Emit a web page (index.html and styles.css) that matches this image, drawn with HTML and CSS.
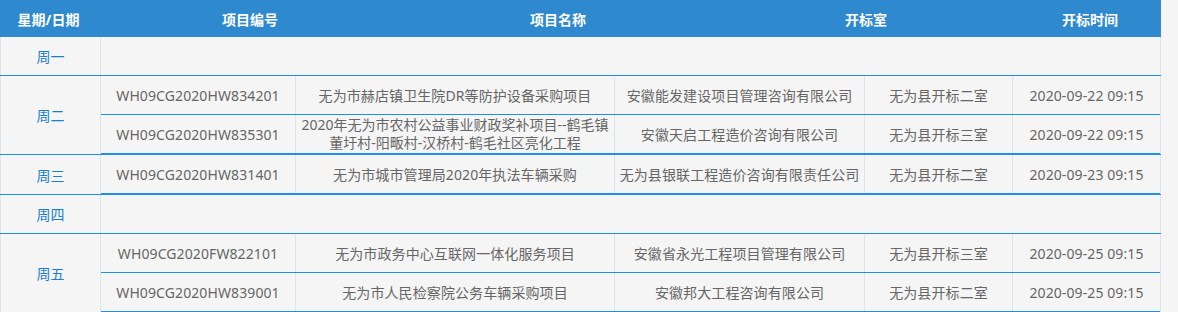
FILE: index.html
```html
<!DOCTYPE html>
<html lang="zh-CN">
<head>
<meta charset="utf-8">
<title>开标安排</title>
<link rel="stylesheet" href="styles.css">
</head>
<body>
<div class="schedule">
  <div class="head">
    <div class="hcell">星期/日期</div>
    <div class="hcell">项目编号</div>
    <div class="hcell">项目名称</div>
    <div class="hcell">开标室</div>
    <div class="hcell">开标时间</div>
  </div>

  <div class="day-row">
    <div class="day">周一</div>
    <div class="items"></div>
  </div>

  <div class="day-row">
    <div class="day">周二</div>
    <div class="items">
      <div class="item">
        <div class="cell">WH09CG2020HW834201</div>
        <div class="cell">无为市赫店镇卫生院DR等防护设备采购项目</div>
        <div class="cell">安徽能发建设项目管理咨询有限公司</div>
        <div class="cell">无为县开标二室</div>
        <div class="cell last">2020-09-22 09:15</div>
      </div>
      <div class="item">
        <div class="cell">WH09CG2020HW835301</div>
        <div class="cell two">2020年无为市农村公益事业财政奖补项目--鹤毛镇<br>董圩村-阳畈村-汉桥村-鹤毛社区亮化工程</div>
        <div class="cell">安徽天启工程造价咨询有限公司</div>
        <div class="cell">无为县开标三室</div>
        <div class="cell last">2020-09-22 09:15</div>
      </div>
    </div>
  </div>

  <div class="day-row">
    <div class="day">周三</div>
    <div class="items">
      <div class="item">
        <div class="cell">WH09CG2020HW831401</div>
        <div class="cell">无为市城市管理局2020年执法车辆采购</div>
        <div class="cell">无为县银联工程造价咨询有限责任公司</div>
        <div class="cell">无为县开标二室</div>
        <div class="cell last">2020-09-23 09:15</div>
      </div>
    </div>
  </div>

  <div class="day-row">
    <div class="day">周四</div>
    <div class="items"></div>
  </div>

  <div class="day-row">
    <div class="day">周五</div>
    <div class="items">
      <div class="item">
        <div class="cell">WH09CG2020FW822101</div>
        <div class="cell">无为市政务中心互联网一体化服务项目</div>
        <div class="cell">安徽省永光工程项目管理有限公司</div>
        <div class="cell">无为县开标三室</div>
        <div class="cell last">2020-09-25 09:15</div>
      </div>
      <div class="item">
        <div class="cell">WH09CG2020HW839001</div>
        <div class="cell">无为市人民检察院公务车辆采购项目</div>
        <div class="cell">安徽邦大工程咨询有限公司</div>
        <div class="cell">无为县开标二室</div>
        <div class="cell last">2020-09-25 09:15</div>
      </div>
    </div>
  </div>
</div>
</body>
</html>
```

FILE: styles.css
```css
html, body {
  margin: 0;
  padding: 0;
  background: #f5f5f5;
}

body {
  font-family: "Noto Sans", "Noto Sans CJK SC", sans-serif;
  font-size: 14px;
  color: #666666;
}

.schedule {
  width: 1161px;
}

.head {
  display: grid;
  grid-template-columns: 97px 306px 310px 306px 142px;
  height: 37px;
  background: #2f89cf;
}

.hcell {
  display: flex;
  align-items: center;
  justify-content: center;
  color: #ffffff;
  font-weight: bold;
  font-size: 14px;
}

.day-row {
  display: flex;
  border-bottom: 1px solid #1e8eef;
}

.day {
  box-sizing: border-box;
  width: 101px;
  min-height: 38px;
  border-left: 1px solid #dbe5ee;
  border-right: 1px solid #dbe5ee;
  display: flex;
  align-items: center;
  justify-content: center;
  color: #1a7fd0;
  font-size: 14px;
}

.items {
  flex: 1;
  border-right: 1px solid #dbe5ee;
}

.item {
  display: grid;
  grid-template-columns: 195px 319px 250px 148px 147px;
  height: 38px;
  border-bottom: 1px solid #1e8eef;
}

.item:last-child {
  border-bottom: 1px solid #1e8eef;
}

.cell {
  box-sizing: border-box;
  border-right: 1px solid #dbe5ee;
  display: flex;
  align-items: center;
  justify-content: center;
  text-align: center;
  white-space: nowrap;
  letter-spacing: 0.1px;
}

.cell.two {
  line-height: 18px;
  font-size: 14px;
  letter-spacing: 0;
}

.cell.last {
  border-right: none;
}
```
